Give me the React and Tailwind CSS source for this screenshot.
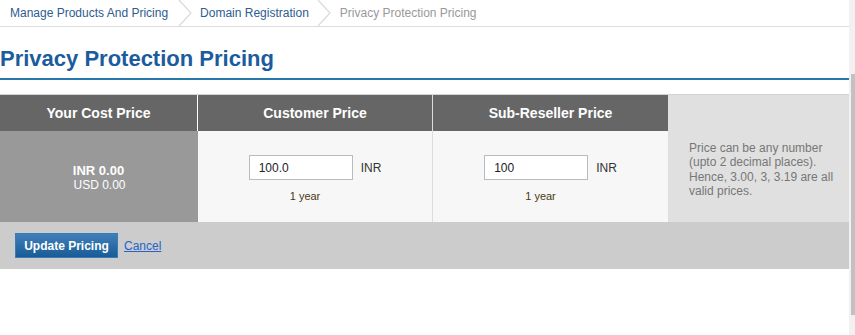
import React from "react";

function Chevron() {
  return (
    <svg width="14" height="26" viewBox="0 0 14 26" className="shrink-0">
      <polyline points="1,0 13,13 1,26" fill="none" stroke="#d9d9d9" strokeWidth="1.2" />
    </svg>
  );
}

function PriceCell({ value, width }) {
  return (
    <div className={`${width} shrink-0 bg-[#f7f7f7] flex flex-col items-center pt-[24px]`}>
      <div className="flex items-center">
        <div className="w-[104px] h-[25px] border border-[#bbbbbb] bg-white flex items-center pl-[9px] text-[12px] text-[#222]">{value}</div>
        <span className="ml-[8px] text-[12px] text-[#333]">INR</span>
      </div>
      <div className="mt-[8px] mr-[20px] text-[11px] text-[#4a3a10]">1 year</div>
    </div>
  );
}

export default function App() {
  return (
    <div className="flex w-[855px] h-[335px] bg-white overflow-hidden" style={{ fontFamily: '"Liberation Sans", Arial, sans-serif' }}>
      <div className="w-[849px] shrink-0 flex flex-col">
        {/* breadcrumb */}
        <div className="h-[27px] flex items-center border-b border-[#dddddd] text-[12px]">
          <span className="pl-[10px] pr-[10px] text-[#2e5c8f]">Manage Products And Pricing</span>
          <Chevron />
          <span className="pl-[8px] pr-[8px] text-[#2e5c8f]">Domain Registration</span>
          <Chevron />
          <span className="pl-[9px] text-[#999999]">Privacy Protection Pricing</span>
        </div>
        {/* title */}
        <h1 className="mt-[18px] text-[22px] leading-[28px] font-bold text-[#1b5c9e]">Privacy Protection Pricing</h1>
        <div className="mt-[5px] h-[2px] bg-[#2677aa]"></div>
        {/* table */}
        <div className="mt-[14px] border-t border-[#d4d4d4]">
          <div className="flex h-[36px]">
            <div className="w-[197px] shrink-0 bg-[#666666] flex items-center justify-center text-white font-bold text-[14px]">Your Cost Price</div>
            <div className="w-[1px] shrink-0 bg-white"></div>
            <div className="w-[234px] shrink-0 bg-[#666666] flex items-center justify-center text-white font-bold text-[14px]">Customer Price</div>
            <div className="w-[1px] shrink-0 bg-[#dddddd]"></div>
            <div className="w-[235px] shrink-0 bg-[#666666] flex items-center justify-center text-white font-bold text-[14px]">Sub-Reseller Price</div>
            <div className="w-[1px] shrink-0 bg-[#e0e0e0]"></div>
            <div className="flex-1 min-w-0 bg-[#e0e0e0]"></div>
          </div>
          <div className="flex h-[91px]">
            <div className="w-[197px] shrink-0 bg-[#999999] flex flex-col items-center justify-center text-white text-[12px] leading-[14px] pt-[2px]">
              <div className="font-bold text-[13px]">INR 0.00</div>
              <div className="pl-[2px]">USD 0.00</div>
            </div>
            <div className="w-[1px] shrink-0 bg-[#999999]"></div>
            <PriceCell value="100.0" width="w-[234px]" />
            <div className="w-[1px] shrink-0 bg-[#dddddd]"></div>
            <PriceCell value="100" width="w-[235px]" />
            <div className="w-[1px] shrink-0 bg-[#dddddd]"></div>
            <div className="flex-1 min-w-0 bg-[#e0e0e0] flex items-center pl-[20px] pb-[14px] text-[12px] leading-[14.5px] text-[#777777]">
              <p className="w-[152px]">Price can be any number (upto 2 decimal places). Hence, 3.00, 3, 3.19 are all valid prices.</p>
            </div>
          </div>
          <div className="h-[47px] bg-[#cbcccb] flex items-center pl-[15px]">
            <button className="h-[25px] w-[103px] border border-[#3d7ab8] bg-gradient-to-b from-[#3f7fb9] to-[#185c97] text-white font-bold text-[12px]">Update Pricing</button>
            <a href="#" className="ml-[6px] text-[12px] text-[#2563c9] underline">Cancel</a>
          </div>
        </div>
      </div>
      <div className="w-[6px] bg-[#f1f1f1] flex flex-col items-end pt-[74px]">
        <div className="w-[4px] h-[241px] bg-[#c1c1c1]"></div>
      </div>
    </div>
  );
}
